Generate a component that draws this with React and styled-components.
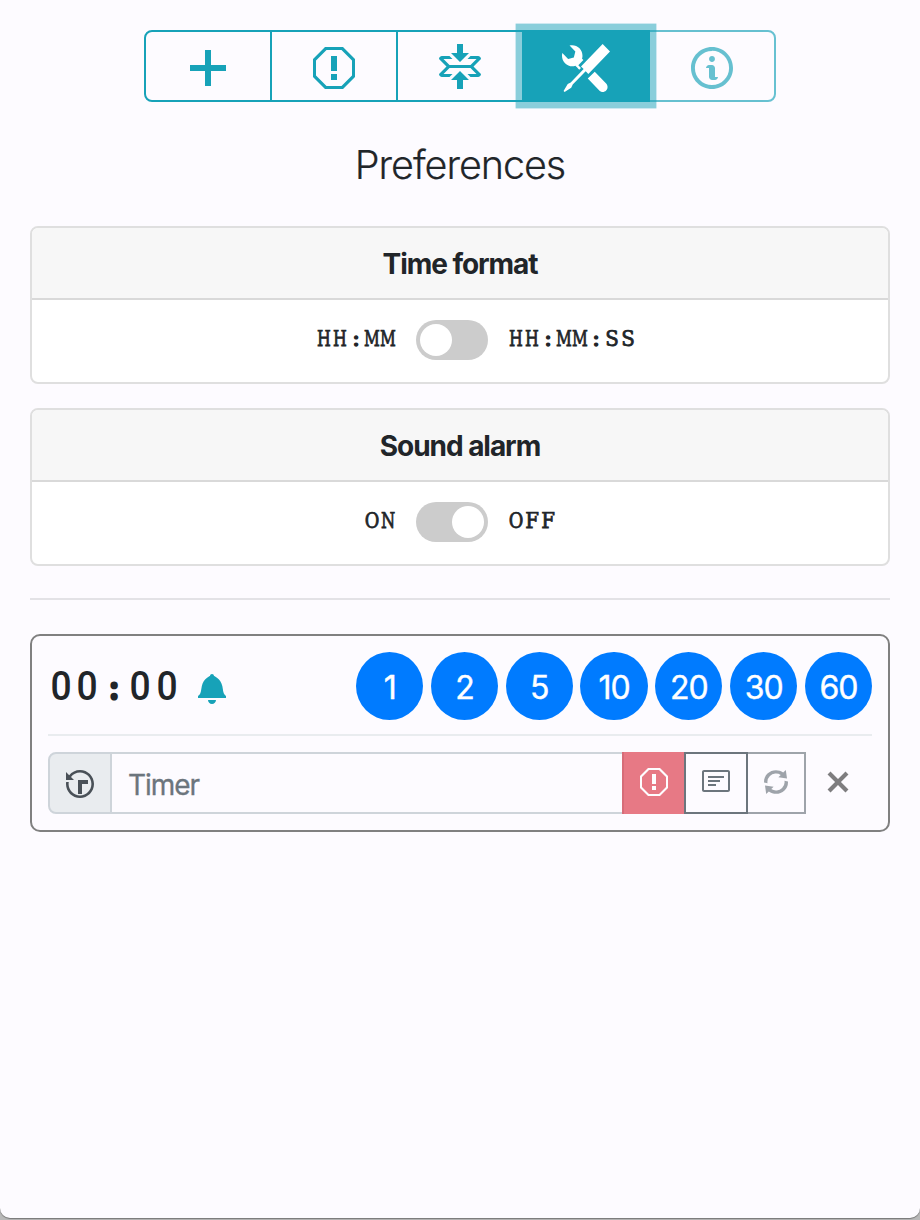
import React from "react";
import styled, { createGlobalStyle, css } from "styled-components";

const GlobalStyle = createGlobalStyle`
  * { box-sizing: border-box; }
  html, body { margin: 0; padding: 0; }
  body {
    background: #b9b9b9;
    color: #212529;
    font-family: Inter, "Liberation Sans", sans-serif;
  }
  button, input { font-family: inherit; margin: 0; }
`;

const paths = {
  plus: [12, "M12 9H7v5H5V9H0V7h5V2h2v5h5v2z"],
  stop: [14, "M10 1H4L0 5v6l4 4h6l4-4V5l-4-4zm3 9.5L9.5 14h-5L1 10.5v-5L4.5 2h5L13 5.5v5zM6 4h2v5H6V4zm0 6h2v2H6v-2z"],
  fold: [14, "M7 9l3 3H8v3H6v-3H4l3-3zm3-6H8V0H6v3H4l3 3 3-3zm4 2c0-.55-.45-1-1-1h-2.5l-1 1h3l-2 2h-7l-2-2h3l-1-1H1c-.55 0-1 .45-1 1l2.5 2.5L0 10c0 .55.45 1 1 1h2.5l1-1h-3l2-2h7l2 2h-3l1 1H13c.55 0 1-.45 1-1l-2.5-2.5L14 5z"],
  tools: [16, "M4.48 7.27c.26.26 1.28 1.33 1.28 1.33l.56-.58-.88-.91 1.69-1.8s-.76-.74-.43-.45c.32-1.19.03-2.51-.87-3.44C4.93.5 3.66.2 2.52.51l1.93 2-.51 1.96-1.89.52-1.93-1.99C-.19 4.17.1 5.48 1 6.4c.94.98 2.29 1.26 3.48.87zm6.44 1.94l-2.33 2.3 3.84 3.98c.31.33.73.49 1.14.49.41 0 .82-.16 1.14-.49.63-.65.63-1.7 0-2.35l-3.79-3.93zM16 2.53L13.55 0 6.33 7.46l.88.91-4.31 4.46-.99.53-1.39 2.27.35.37 2.2-1.44.51-1.02L7.9 9.08l.88.91L16 2.53z"],
  info: [14, "M6.3 5.69a.942.942 0 0 1-.28-.7c0-.28.09-.52.28-.7.19-.18.42-.28.7-.28.28 0 .52.09.7.28.18.19.28.42.28.7 0 .28-.09.52-.28.7a1 1 0 0 1-.7.3c-.28 0-.52-.11-.7-.3zM8 7.99c-.02-.25-.11-.48-.31-.69-.2-.19-.42-.3-.69-.31H6c-.27.02-.48.13-.69.31-.2.2-.3.44-.31.69h1v3c.02.27.11.5.31.69.2.2.42.31.69.31h1c.27 0 .48-.11.69-.31.2-.19.3-.42.31-.69H8V7.98v.01zM7 2.3c-3.14 0-5.7 2.54-5.7 5.68 0 3.14 2.56 5.7 5.7 5.7s5.7-2.55 5.7-5.7c0-3.15-2.56-5.69-5.7-5.69v.01zM7 .98c3.86 0 7 3.14 7 7s-3.14 7-7 7-7-3.12-7-7 3.14-7 7-7z"],
  bell: [14, "M14 12v1H0v-1l.73-.58c.77-.77.81-2.55 1.19-4.42C2.69 3.23 6 2 6 2c0-.55.45-1 1-1s1 .45 1 1c0 0 3.39 1.23 4.16 5 .38 1.88.42 3.66 1.19 4.42l.66.58H14zm-7 4c1.11 0 2-.89 2-2H5c0 1.11.89 2 2 2z"],
  history: [14, "M8 13H6V6h5v2H8v5zM7 1C4.81 1 2.87 2.02 1.59 3.59L0 2v4h4L2.5 4.5C3.55 3.17 5.17 2.3 7 2.3c3.14 0 5.7 2.56 5.7 5.7s-2.56 5.7-5.7 5.7A5.71 5.71 0 0 1 1.3 8c0-.34.03-.67.09-1H.08C.03 7.33 0 7.66 0 8c0 3.86 3.14 7 7 7s7-3.14 7-7-3.14-7-7-7z"],
  note: [14, "M3 10h4V9H3v1zm0-2h6V7H3v1zm0-2h8V5H3v1zm10 6H1V3h12v9zM1 2c-.55 0-1 .45-1 1v9c0 .55.45 1 1 1h12c.55 0 1-.45 1-1V3c0-.55-.45-1-1-1H1z"],
  sync: [12, "M10.24 7.4a4.15 4.15 0 0 1-1.2 3.6 4.346 4.346 0 0 1-5.41.54L4.8 10.4.5 9.8l.6 4.2 1.31-1.26c2.36 1.74 5.7 1.57 7.84-.54a5.876 5.876 0 0 0 1.74-4.46l-1.75-.34zM2.96 5a4.346 4.346 0 0 1 5.41-.54L7.2 5.6l4.3.6-.6-4.2-1.31 1.26c-2.36-1.74-5.7-1.57-7.85.54C.5 5.03-.06 6.65.01 8.26l1.75.35A4.17 4.17 0 0 1 2.96 5z"],
  x: [12, "M7.48 8l3.75 3.75-1.48 1.48L6 9.48l-3.75 3.75-1.48-1.48L4.52 8 .77 4.25l1.48-1.48L6 6.52l3.75-3.75 1.48 1.48L7.48 8z"],
};

const Glyph = styled.svg`
  display: block;
  flex: none;
  fill: currentColor;
`;

function Icon({ name, scale = 2 }) {
  const [w, d] = paths[name];
  return (
    <Glyph width={w * scale} height={16 * scale} viewBox={`0 0 ${w} 16`} aria-hidden="true">
      <path fillRule="evenodd" d={d} />
    </Glyph>
  );
}

const Window = styled.main`
  height: 1218px;
  padding: 30px 30px 0;
  background: #fdfbff;
  border-radius: 0 0 10px 10px;
  box-shadow: 0 1px 1px #777;
`;

const Page = styled.div`
  height: 1220px;
  overflow: hidden;
`;

const Toolbar = styled.nav`
  display: flex;
  justify-content: center;
`;

const ToolButton = styled.button`
  display: flex;
  align-items: center;
  justify-content: center;
  width: 128px;
  height: 72px;
  padding: 4px 0 0;
  border: 2px solid #17a2b8;
  background: transparent;
  color: #17a2b8;
  &:not(:first-child) { margin-left: -2px; }
  &:first-child { border-radius: 8px 0 0 8px; }
  &:last-child { border-radius: 0 8px 8px 0; }
  &:disabled { opacity: 0.65; }
  ${(p) => p.$active && css`
    position: relative;
    z-index: 1;
    background: #17a2b8;
    color: #fff;
    box-shadow: 0 0 0 6.4px rgba(23, 162, 184, 0.5);
  `}
`;

const Title = styled.h1`
  margin: 39px 0 37px;
  font-size: 39.5px;
  line-height: 48px;
  font-weight: 300;
  letter-spacing: -1.05px;
  -webkit-text-stroke: 0.2px currentColor;
  text-align: center;
`;

const Card = styled.section`
  height: 158px;
  margin-bottom: 24px;
  border: 2px solid #dfdfdf;
  border-radius: 8px;
  background: #fff;
  overflow: hidden;
`;

const CardHeader = styled.h2`
  height: 72px;
  margin: 0;
  border-bottom: 2px solid #d9d9d9;
  background: #f7f7f7;
  font-size: 28px;
  line-height: 72px;
  font-weight: 700;
  letter-spacing: -1.05px;
  text-align: center;
`;

const SwitchRow = styled.div`
  display: grid;
  grid-template-columns: 1fr 72px 1fr;
  column-gap: 20px;
  align-items: center;
  height: 80px;
  padding-right: 16px;
`;

const Typed = styled.span`
  display: flex;
  justify-self: ${(p) => (p.$end ? "end" : "start")};
  margin-top: -3px;
  font: 400 22px/30px "DejaVu Serif Condensed", "DejaVu Serif", serif;
`;

const TypedCell = styled.span`
  display: flex;
  justify-content: center;
  width: 16px;
  -webkit-text-stroke: ${(p) => (p.$dots ? 1.3 : 0.75)}px currentColor;
  transform: scaleX(${(p) => p.$squeeze});
`;

const squeeze = { M: 0.78, H: 0.8, N: 0.82, O: 0.9, F: 1, S: 1, ":": 1.15 };

function TypedLabel({ text, end }) {
  return (
    <Typed $end={end}>
      {[...text].map((ch, i) => (
        <TypedCell key={i} $squeeze={squeeze[ch]} $dots={ch === ":"}>{ch}</TypedCell>
      ))}
    </Typed>
  );
}

const Track = styled.button`
  display: flex;
  align-items: center;
  justify-content: ${(p) => (p.$on ? "flex-end" : "flex-start")};
  width: 72px;
  height: 40px;
  padding: 0 4px;
  border: 0;
  border-radius: 20px;
  background: #ccc;
`;

const Knob = styled.span`
  width: 32px;
  height: 32px;
  border-radius: 50%;
  background: #fff;
`;

const Divider = styled.hr`
  height: 2px;
  margin: 32px 0 34px;
  border: 0;
  background: #e3e2e6;
`;

const TimerCard = styled.section`
  height: 198px;
  padding: 16px;
  border: 2px solid #808080;
  border-radius: 10px;
`;

const TimerTop = styled.div`
  display: flex;
  align-items: center;
  height: 84px;
  padding-bottom: 14px;
  border-bottom: 2px solid #e9ecef;
`;

const Clock = styled.div`
  display: flex;
  padding-top: 3px;
  margin-right: 18px;
  font: 500 40px/48px Roboto, sans-serif;
`;

const ClockCell = styled.span`
  width: 26.4px;
  text-align: center;
  transform: scaleX(0.93);
  ${(p) => p.$colon && css`
    font: 700 29px/49px "Open Sans", sans-serif;
    -webkit-text-stroke: 3px currentColor;
  `}
`;

const BellMark = styled.span`
  padding-top: 4px;
  color: #17a2b8;
`;

const Presets = styled.div`
  display: flex;
  gap: 7.6px;
  margin-left: auto;
`;

const Preset = styled.button`
  width: 67.2px;
  height: 68px;
  padding: 3px 0 0;
  border: 0;
  border-radius: 50%;
  background: #007bff;
  color: #fff;
  font-size: 32px;
  line-height: 48px;
  letter-spacing: -1px;
  -webkit-text-stroke: 0.4px currentColor;
`;

const TimerForm = styled.div`
  display: flex;
  height: 62px;
  margin-top: 16px;
`;

const Prefix = styled.span`
  display: flex;
  align-items: center;
  justify-content: center;
  width: 64px;
  padding-top: 2px;
  border: 2px solid #ced4da;
  border-radius: 8px 0 0 8px;
  background: #e9ecef;
  color: #495057;
`;

const NameInput = styled.input`
  width: 514px;
  margin-left: -2px;
  padding: 3px 16px 0;
  border: 2px solid #ced4da;
  border-radius: 0;
  background: transparent;
  font-size: 28px;
  letter-spacing: -1.05px;
  &::placeholder { color: #6c757d; opacity: 1; -webkit-text-stroke: 0.3px #6c757d; }
`;

const Action = styled.button`
  display: flex;
  align-items: center;
  justify-content: center;
  width: ${(p) => p.$width || 64}px;
  margin-left: -2px;
  padding: 0 0 2px;
  border: 2px solid #6c757d;
  background: transparent;
  color: #6c757d;
  &:disabled { opacity: 0.65; }
  ${(p) => p.$kind === "danger" && css`
    border-color: #dc3545;
    background: #dc3545;
    color: #fff;
  `}
  ${(p) => p.$kind === "main" && css`
    position: relative;
    z-index: 1;
    background: #fdfbff;
  `}
`;

const Close = styled.button`
  display: flex;
  align-items: center;
  margin-left: 20px;
  padding: 0 0 2px;
  border: 0;
  background: transparent;
  color: #7e7d7f;
`;

const TIME = "00:00";
const PRESETS = [1, 2, 5, 10, 20, 30, 60];

function Preference({ title, left, right, on }) {
  return (
    <Card>
      <CardHeader>{title}</CardHeader>
      <SwitchRow>
        <TypedLabel text={left} end />
        <Track $on={on} role="switch" aria-checked={!!on}><Knob /></Track>
        <TypedLabel text={right} />
      </SwitchRow>
    </Card>
  );
}

export default function App() {
  return (
    <Page>
      <GlobalStyle />
      <Window>
        <Toolbar>
          <ToolButton><Icon name="plus" scale={3} /></ToolButton>
          <ToolButton><Icon name="stop" scale={3} /></ToolButton>
          <ToolButton><Icon name="fold" scale={3} /></ToolButton>
          <ToolButton $active><Icon name="tools" scale={3} /></ToolButton>
          <ToolButton disabled><Icon name="info" scale={3} /></ToolButton>
        </Toolbar>
        <Title>Preferences</Title>
        <Preference title="Time format" left="HH:MM" right="HH:MM:SS" />
        <Preference title="Sound alarm" left="ON" right="OFF" on />
        <Divider />
        <TimerCard>
          <TimerTop>
            <Clock>
              {[...TIME].map((ch, i) => (
                <ClockCell key={i} $colon={ch === ":"}>{ch}</ClockCell>
              ))}
            </Clock>
            <BellMark><Icon name="bell" /></BellMark>
            <Presets>
              {PRESETS.map((n) => <Preset key={n}>{n}</Preset>)}
            </Presets>
          </TimerTop>
          <TimerForm>
            <Prefix><Icon name="history" /></Prefix>
            <NameInput placeholder="Timer" />
            <Action $kind="danger" disabled><Icon name="stop" /></Action>
            <Action $kind="main"><Icon name="note" /></Action>
            <Action $width={60} disabled><Icon name="sync" /></Action>
            <Close><Icon name="x" /></Close>
          </TimerForm>
        </TimerCard>
      </Window>
    </Page>
  );
}
